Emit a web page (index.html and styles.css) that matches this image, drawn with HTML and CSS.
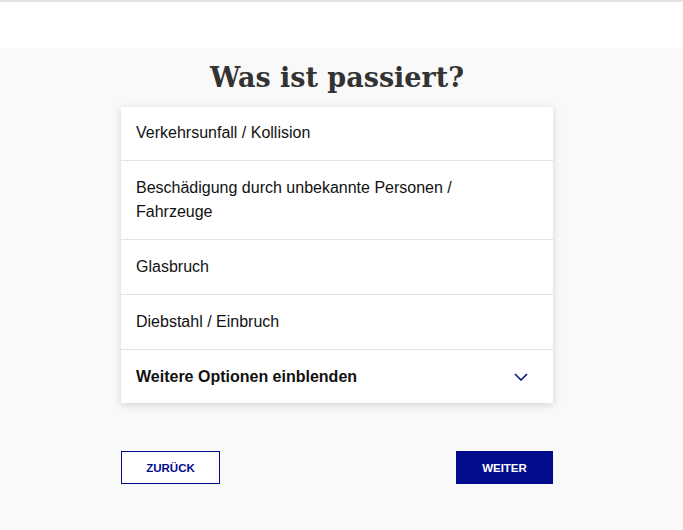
FILE: index.html
```html
<!DOCTYPE html>
<html lang="de">
<head>
  <meta charset="UTF-8">
  <meta name="viewport" content="width=device-width, initial-scale=1.0">
  <title>Was ist passiert?</title>
  <link rel="stylesheet" href="styles.css">
</head>
<body>
  <header class="topbar"></header>

  <main class="step">
    <h1>Was ist passiert?</h1>

    <ul class="choices">
      <li class="choice">Verkehrsunfall / Kollision</li>
      <li class="choice">Beschädigung durch unbekannte Personen / Fahrzeuge</li>
      <li class="choice">Glasbruch</li>
      <li class="choice">Diebstahl / Einbruch</li>
      <li class="choice more">
        <span>Weitere Optionen einblenden</span>
        <svg class="chevron" width="14" height="8" viewBox="0 0 14 8" aria-hidden="true">
          <path d="M1 1l6 6 6-6" fill="none" stroke="currentColor" stroke-width="1.5"/>
        </svg>
      </li>
    </ul>

    <div class="nav">
      <button type="button" class="btn btn-back">Zurück</button>
      <button type="button" class="btn btn-next">Weiter</button>
    </div>
  </main>
</body>
</html>
```

FILE: styles.css
```css
body {
  margin: 0;
  background-color: #f9f9f9;
  font-family: "Liberation Sans", Arial, sans-serif;
  color: #111;
}

.topbar {
  height: 46px;
  background-color: #fff;
  border-top: 2px solid #e4e4e4;
}

.step {
  width: 432px;
  margin-left: 121px;
  padding-top: 10px;
}

h1 {
  margin: 0 0 9px;
  text-align: center;
  font-family: "DejaVu Serif", Georgia, serif;
  font-size: 27px;
  line-height: 40px;
  color: #333;
}

.choices {
  list-style: none;
  margin: 0;
  padding: 0;
  background-color: #fff;
  box-shadow: 0 2px 8px rgba(0, 0, 0, 0.15);
}

.choice {
  padding: 15px 60px 15px 15px;
  font-size: 16px;
  line-height: 24px;
  border-bottom: 1px solid #e2e2e2;
}

.choice:first-child {
  padding-top: 14px;
}

.choice.more {
  display: flex;
  justify-content: space-between;
  align-items: center;
  padding-right: 15px;
  padding-bottom: 14px;
  font-weight: bold;
  border-bottom: none;
}

.chevron {
  color: #000b8c;
  margin-right: 10px;
}

.nav {
  display: flex;
  justify-content: space-between;
  margin-top: 48px;
}

.btn {
  height: 33px;
  padding: 0 20px;
  font-family: "Liberation Sans", Arial, sans-serif;
  font-size: 11.5px;
  font-weight: bold;
  text-transform: uppercase;
  cursor: pointer;
  border: 1px solid #000b8c;
}

.btn-back {
  width: 99px;
  background-color: #fff;
  color: #000b8c;
}

.btn-next {
  width: 97px;
  background-color: #020c8c;
  color: #fff;
}
```
